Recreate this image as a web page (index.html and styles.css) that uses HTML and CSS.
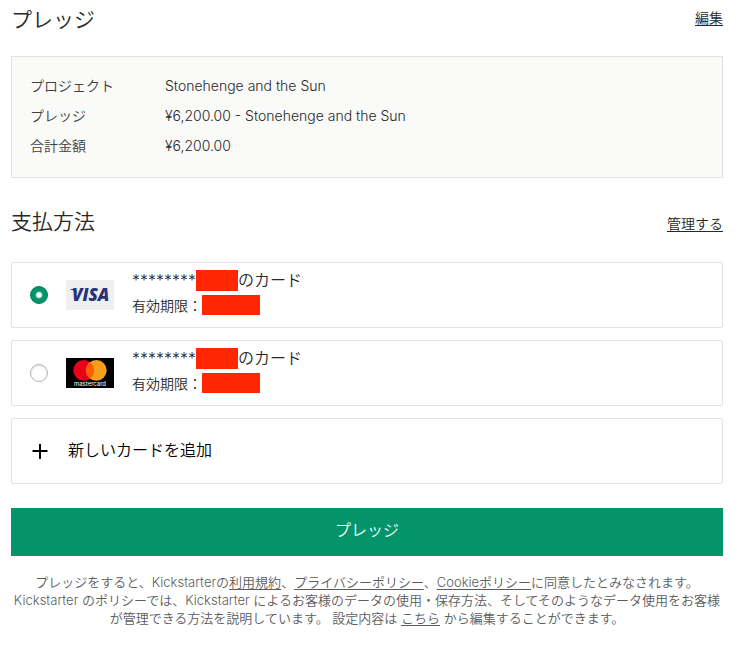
FILE: index.html
```html
<!DOCTYPE html>
<html lang="ja">
<head>
<meta charset="UTF-8">
<meta name="viewport" content="width=device-width, initial-scale=1.0">
<title>プレッジ</title>
<link rel="stylesheet" href="styles.css">
</head>
<body>
  <form class="checkout">
    <div class="section-head">
      <h2>プレッジ</h2>
      <a href="#">編集</a>
    </div>
    <dl class="summary">
      <dt>プロジェクト</dt>
      <dd>Stonehenge and the Sun</dd>
      <dt>プレッジ</dt>
      <dd>¥6,200.00 - Stonehenge and the Sun</dd>
      <dt>合計金額</dt>
      <dd>¥6,200.00</dd>
    </dl>

    <div class="section-head payment-head">
      <h2>支払方法</h2>
      <a href="#">管理する</a>
    </div>
    <div class="cards">
      <label class="card" for="card-visa">
        <input type="radio" name="card" id="card-visa" checked>
        <svg class="logo" viewBox="0 0 48 30" aria-hidden="true">
          <rect width="48" height="30" fill="#efefef"/>
          <path d="M4 9h4.500q1.500 0 1.800 1.500l.5 2.500Q8 10 4 9.300z" fill="#26337a"/>
          <text class="visa-name" x="6" y="21">VISA</text>
        </svg>
        <span class="card-text">
          <span class="card-number">********<span class="mask"></span>のカード</span>
          <span class="card-expiry">有効期限：<span class="mask"></span></span>
        </span>
      </label>
      <label class="card" for="card-master">
        <input type="radio" name="card" id="card-master">
        <svg class="logo" viewBox="0 0 48 30" aria-hidden="true">
          <rect width="48" height="30" fill="#000"/>
          <circle cx="17.700" cy="12.300" r="10.400" fill="#eb001b"/>
          <circle cx="30.300" cy="12.300" r="10.400" fill="#f79e1b"/>
          <path d="M24 4a10.400 10.400 0 0 1 0 16.600a10.400 10.400 0 0 1 0-16.600z" fill="#ff5f00"/>
          <text class="master-name" x="24" y="28">mastercard</text>
        </svg>
        <span class="card-text">
          <span class="card-number">********<span class="mask"></span>のカード</span>
          <span class="card-expiry">有効期限：<span class="mask"></span></span>
        </span>
      </label>
      <button type="button" class="card add-card">
        <svg class="plus" viewBox="0 0 20 20" aria-hidden="true">
          <path d="M10 3v15M2.500 10h15" stroke="#000" stroke-width="2"/>
        </svg>
        <span class="add-label">新しいカードを追加</span>
      </button>
    </div>

    <button type="submit" class="pledge">プレッジ</button>
    <p class="terms">
      プレッジをすると、Kickstarterの<a href="#">利用規約</a>、<a href="#">プライバシーポリシー</a>、<a href="#">Cookieポリシー</a>に同意したとみなされます。<br>
      Kickstarter のポリシーでは、Kickstarter によるお客様のデータの使用・保存方法、そしてそのようなデータ使用をお客様が管理できる方法を説明しています。 設定内容は <a href="#">こちら</a> から編集することができます。
    </p>
  </form>
</body>
</html>
```
FILE: styles.css
```css
* {
  box-sizing: border-box;
}
body {
  margin: 0;
  padding: 8px 23px 24px 11px;
  background-color: #fff;
  color: #282828;
  font-family: Inter, "Noto Sans CJK JP", sans-serif;
  font-size: 14px;
  font-weight: 350;
}
a {
  color: inherit;
  text-underline-offset: 2px;
}
.section-head {
  display: flex;
  justify-content: space-between;
  line-height: 24px;
}
.section-head a {
  line-height: 20px;
}
.payment-head {
  align-items: flex-end;
}
h2 {
  margin: 0;
  font-size: 21px;
  font-weight: 350;
}
.summary {
  display: grid;
  grid-template-columns: 117px 1fr;
  column-gap: 18px;
  margin: 24px 0 32px;
  padding: 14px 18px 16px;
  border: 1px solid #e3e3e3;
  background-color: #fafaf8;
  line-height: 30px;
}
.summary dt {
  color: #404040;
}
.summary dd {
  margin: 0;
}
.cards {
  display: flex;
  flex-direction: column;
  gap: 12px;
  margin: 28px 0 24px;
}
.card {
  display: flex;
  align-items: center;
  gap: 18px;
  min-height: 66px;
  padding: 0 18px;
  border: 1px solid #e3e3e3;
  border-radius: 2px;
  background-color: #fff;
  cursor: pointer;
}
.card input {
  appearance: none;
  width: 18px;
  height: 18px;
  margin: 0;
  border: 1px solid #b5b5b5;
  border-radius: 50%;
  background-color: #fff;
  box-shadow: inset 0 1px 2px #ddd;
}
.card input:checked {
  border-color: #037a55;
  background: radial-gradient(circle, #fff 2px, #03946b 4px);
  box-shadow: none;
}
.logo {
  width: 48px;
  height: 30px;
}
.visa-name {
  fill: #26337a;
  font: italic 800 17px "Open Sans", sans-serif;
}
.master-name {
  fill: #fff;
  font: 6px Inter, sans-serif;
  text-anchor: middle;
}
.card-text {
  display: flex;
  flex-direction: column;
  padding-bottom: 5px;
}
.card-number,
.card-expiry {
  display: flex;
  align-items: center;
  line-height: 25px;
}
.card-number {
  font-size: 16px;
}
.mask {
  width: 42px;
  height: 21px;
  background-color: #ff2600;
}
.card-expiry .mask {
  width: 58px;
  height: 20px;
}
.add-card {
  width: 100%;
  color: #000;
  font-family: inherit;
  font-size: 16px;
  font-weight: inherit;
}
.add-label {
  padding-bottom: 5px;
}
.plus {
  width: 20px;
  height: 20px;
}
.pledge {
  display: block;
  width: 100%;
  height: 48px;
  padding: 0 0 6px;
  border: none;
  background-color: #03946b;
  color: #fff;
  font-family: inherit;
  font-size: 16px;
  font-weight: inherit;
  cursor: pointer;
}
.terms {
  margin: 17px 0 0;
  color: #5c5c5c;
  font-size: 13px;
  line-height: 18px;
  text-align: center;
}
```
